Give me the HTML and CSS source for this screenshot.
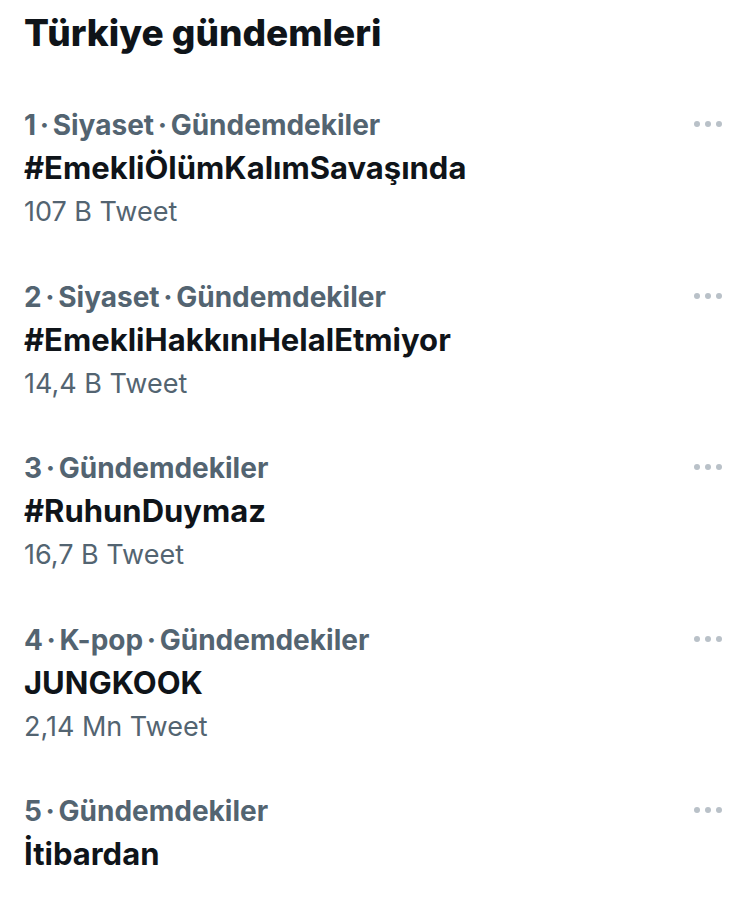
FILE: index.html
```html
<!DOCTYPE html>
<html lang="tr">
<head>
  <meta charset="UTF-8" />
  <meta name="viewport" content="width=device-width, initial-scale=1.0"/>
  <title>Türkiye gündemleri</title>
  <link rel="stylesheet" href="styles.css">
</head>
<body>
  <!-- Gündem listesi -->
  <div class="trends">
    <h1>Türkiye gündemleri</h1>

    <div class="trend">
      <div class="trend-text">
        <div class="meta">1 · Siyaset · Gündemdekiler</div>
        <div class="name">#EmekliÖlümKalımSavaşında</div>
        <div class="count">107 B Tweet</div>
      </div>
      <div class="more"><span></span><span></span><span></span></div>
    </div>

    <div class="trend">
      <div class="trend-text">
        <div class="meta">2 · Siyaset · Gündemdekiler</div>
        <div class="name">#EmekliHakkınıHelalEtmiyor</div>
        <div class="count">14,4 B Tweet</div>
      </div>
      <div class="more"><span></span><span></span><span></span></div>
    </div>

    <div class="trend">
      <div class="trend-text">
        <div class="meta">3 · Gündemdekiler</div>
        <div class="name">#RuhunDuymaz</div>
        <div class="count">16,7 B Tweet</div>
      </div>
      <div class="more"><span></span><span></span><span></span></div>
    </div>

    <div class="trend">
      <div class="trend-text">
        <div class="meta">4 · K-pop · Gündemdekiler</div>
        <div class="name">JUNGKOOK</div>
        <div class="count">2,14 Mn Tweet</div>
      </div>
      <div class="more"><span></span><span></span><span></span></div>
    </div>

    <div class="trend">
      <div class="trend-text">
        <div class="meta">5 · Gündemdekiler</div>
        <div class="name">İtibardan</div>
      </div>
      <div class="more"><span></span><span></span><span></span></div>
    </div>
  </div>
</body>
</html>
```

FILE: styles.css
```css
* { margin: 0; padding: 0; box-sizing: border-box; }
body {
  font-family: Inter, "Noto Sans", sans-serif;
  background-color: #fff;
  color: #0f1419;
}
.trends {
  padding: 10px 28px 0 24px;
}
.trends h1 {
  font-size: 37px;
  font-weight: 800;
  line-height: 46px;
  margin-bottom: 47px;
}
.trend {
  display: flex;
  justify-content: space-between;
  align-items: flex-start;
  padding-bottom: 40.5px;
}
.meta {
  font-size: 28px;
  font-weight: 700;
  color: #536471;
  line-height: 44px;
  word-spacing: -3px;
}
.name {
  font-size: 31px;
  font-weight: 700;
  line-height: 42px;
}
.count {
  font-size: 27px;
  color: #536471;
  line-height: 45px;
}
/* Üç nokta menyu */
.more {
  display: flex;
  gap: 5px;
  padding-top: 18px;
}
.more span {
  width: 6px;
  height: 6px;
  border-radius: 50%;
  background-color: #b9c1c8;
}
```
